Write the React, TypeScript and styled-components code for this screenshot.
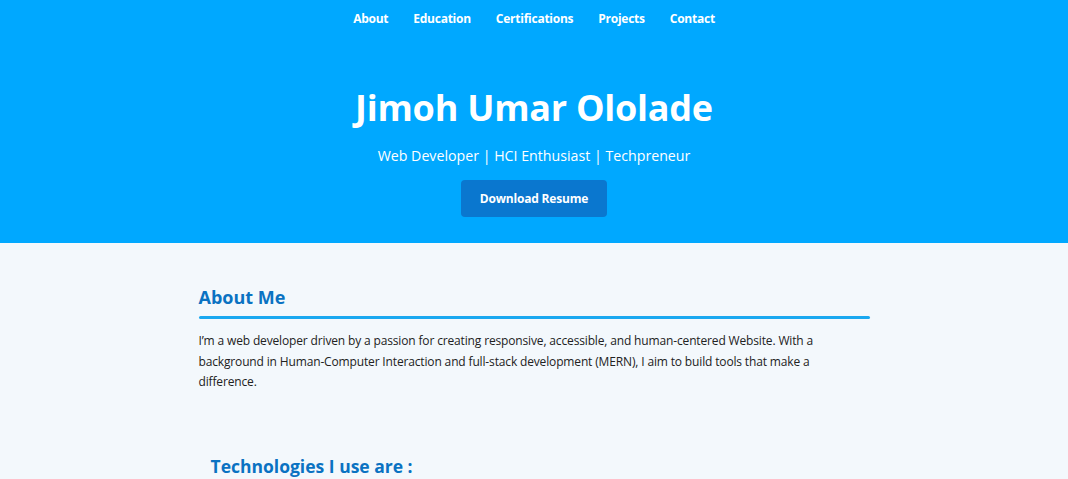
import React from "react";
import styled, { createGlobalStyle } from "styled-components";

const Global = createGlobalStyle`
  html, body { margin: 0; padding: 0; }
  body {
    background: #f3f8fc;
    font-family: "Open Sans", "Noto Sans", sans-serif;
    color: #222;
  }
`;

const Header = styled.header`
  background: #00a8ff;
  color: #fff;
  height: 243px;
  display: flex;
  flex-direction: column;
  align-items: center;
`;

const Nav = styled.nav`
  display: flex;
  justify-content: center;
  gap: 25px;
  padding-top: 10px;
  height: 17px;
`;

const NavLink = styled.a`
  color: #fff;
  font-weight: 700;
  font-size: 12px;
  letter-spacing: -0.25px;
  line-height: 17px;
  text-decoration: none;
`;

const Name = styled.h1`
  margin: 58px 0 0;
  font-size: 36px;
  letter-spacing: -0.25px;
  line-height: 46px;
  font-weight: 700;
`;

const Tagline = styled.p`
  margin: 14px 0 0;
  font-size: 14.2px;
  line-height: 22px;
`;

const Button = styled.a`
  margin-top: 13px;
  width: 146px;
  height: 37px;
  display: flex;
  align-items: center;
  justify-content: center;
  background: #0a77cf;
  border-radius: 4px;
  color: #fff;
  font-weight: 700;
  font-size: 12px;
  letter-spacing: -0.2px;
  text-decoration: none;
`;

const Main = styled.main`
  width: 671px;
  margin: 0 auto;
  padding-top: 41px;
`;

const SectionTitle = styled.h2<{ $indent?: number; $size?: number }>`
  margin: 0;
  padding-left: ${(p) => p.$indent ?? 0}px;
  color: #0a72c2;
  font-size: ${(p) => p.$size ?? 18}px;
  line-height: 26px;
  font-weight: 700;
`;

const Rule = styled.div`
  height: 3px;
  background: #1aa8f0;
  margin-top: 6px;
  border-radius: 2px;
`;

const Para = styled.p`
  margin: 12px 0 0;
  font-size: 12px;
  letter-spacing: -0.15px;
  line-height: 20.5px;
  color: #222;
`;

const Spacer = styled.div`
  height: 60px;
`;

export default function App() {
  return (
    <>
      <Global />
      <Header>
        <Nav>
          <NavLink href="#about">About</NavLink>
          <NavLink href="#education">Education</NavLink>
          <NavLink href="#certifications">Certifications</NavLink>
          <NavLink href="#projects">Projects</NavLink>
          <NavLink href="#contact">Contact</NavLink>
        </Nav>
        <Name>Jimoh Umar Ololade</Name>
        <Tagline>Web Developer | HCI Enthusiast | Techpreneur</Tagline>
        <Button href="#">Download Resume</Button>
      </Header>
      <Main>
        <SectionTitle>About Me</SectionTitle>
        <Rule />
        <Para>
          I’m a web developer driven by a passion for creating responsive, accessible, and
          human-centered Website. With a background in Human-Computer Interaction and full-stack
          development (MERN), I aim to build tools that make a difference.
        </Para>
        <Spacer />
        <SectionTitle $indent={12} $size={17.5}>Technologies I use are :</SectionTitle>
      </Main>
    </>
  );
}
